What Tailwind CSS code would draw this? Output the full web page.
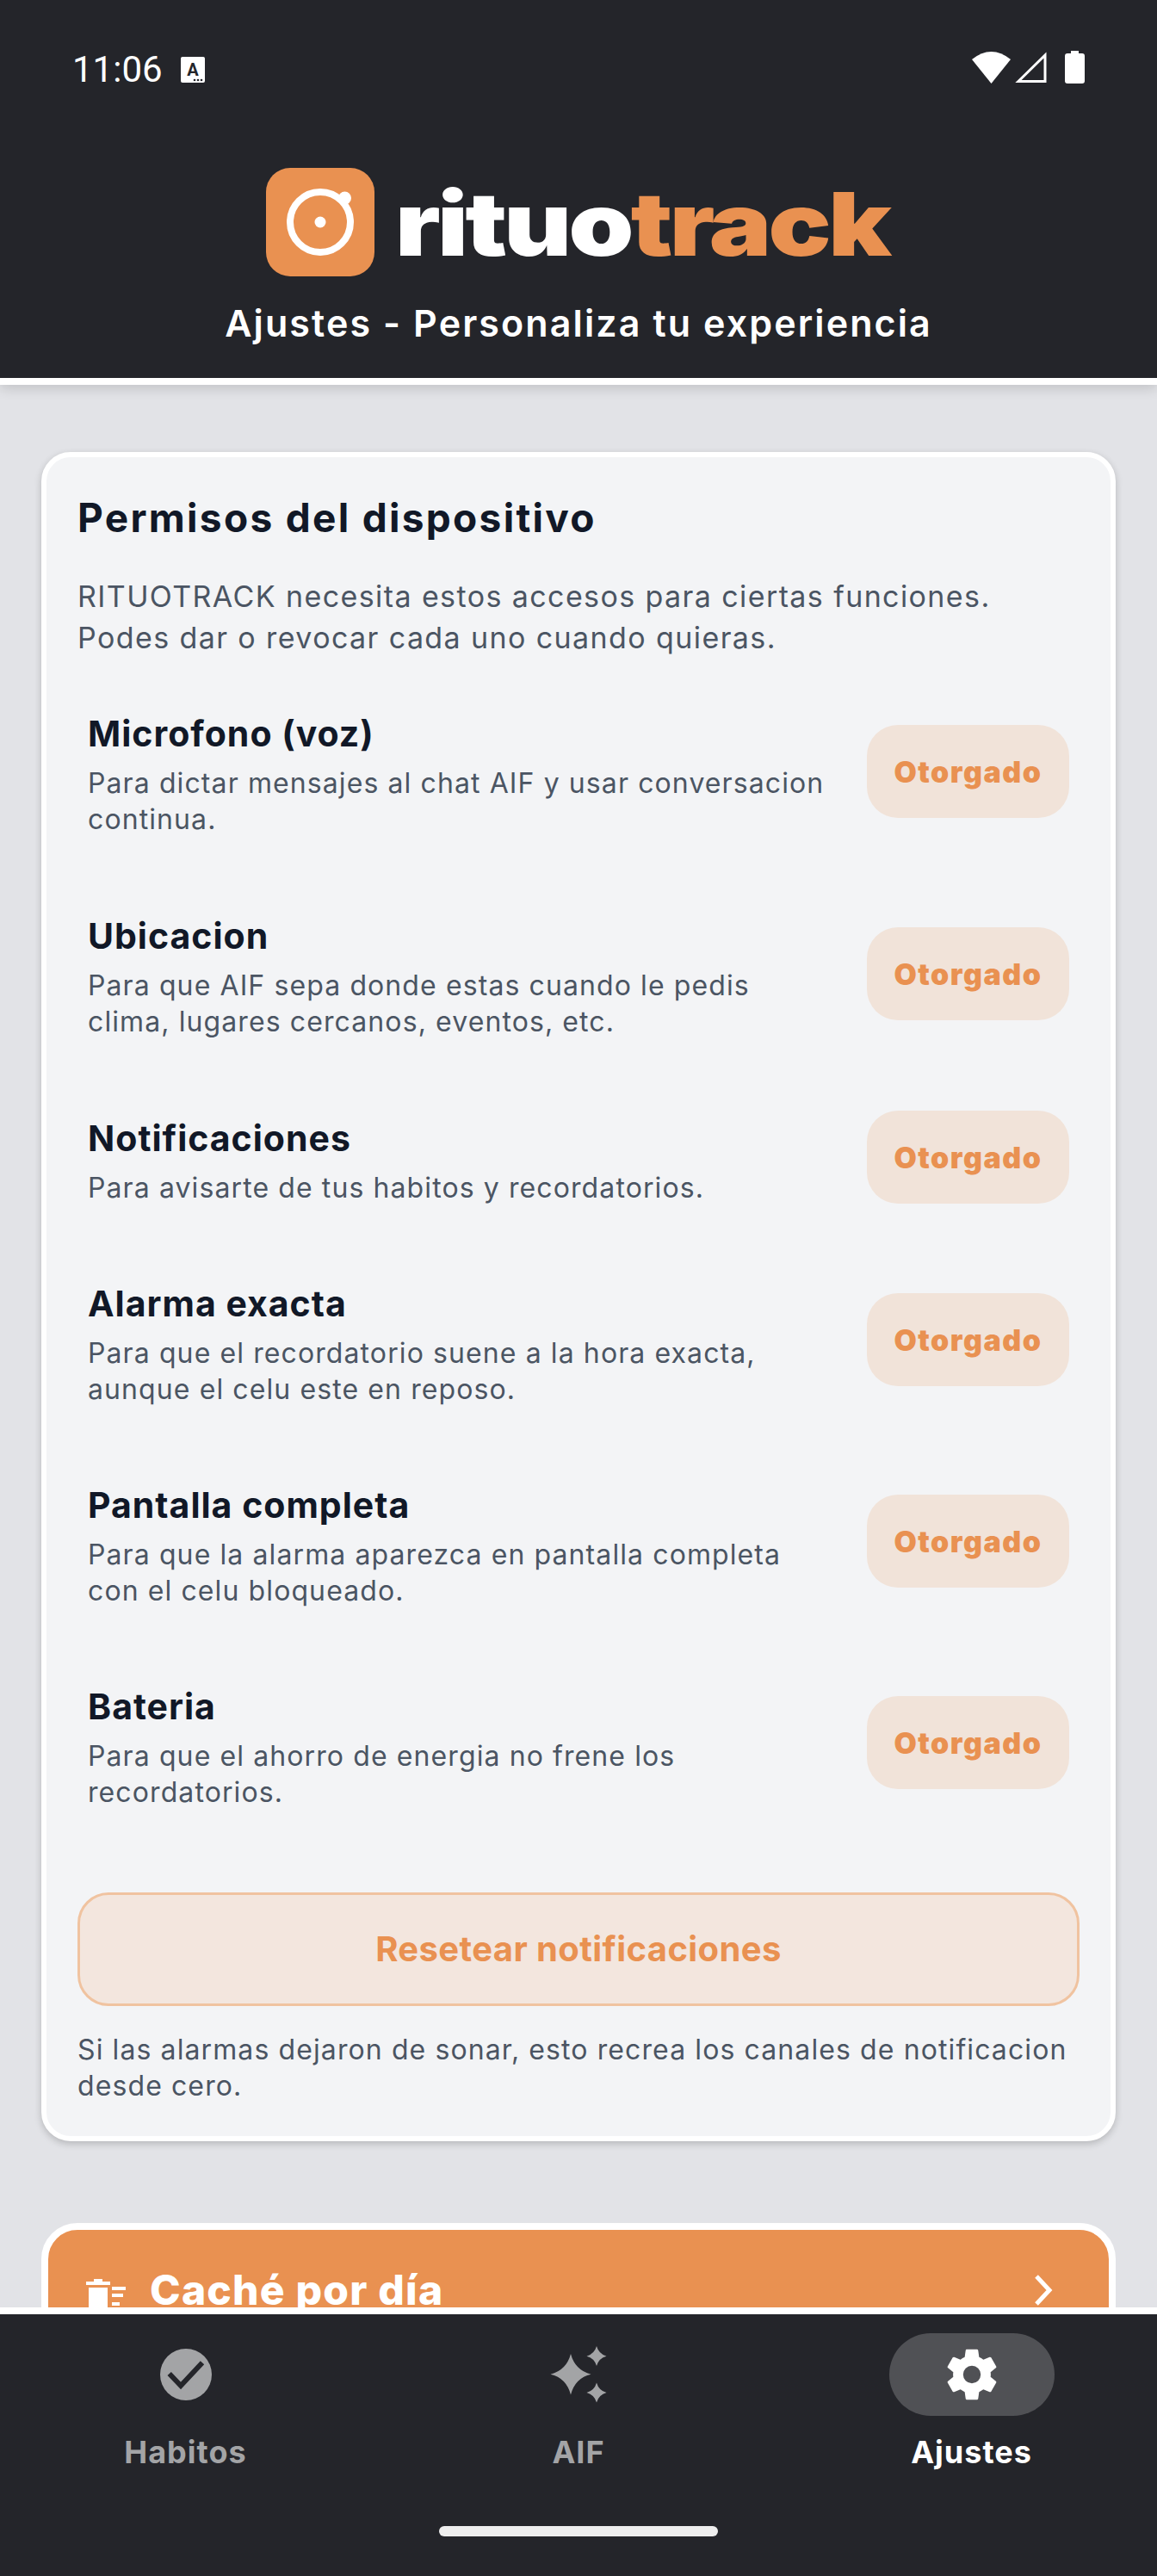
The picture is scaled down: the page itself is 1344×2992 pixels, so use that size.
<!DOCTYPE html>
<html lang="es">
<head>
    <meta charset="UTF-8">
    <meta name="viewport" content="width=device-width, initial-scale=1.0">
    <title>Ritutrack Ajustes</title>
    <script src="https://cdn.jsdelivr.net/npm/@tailwindcss/browser@4"></script>
</head>
<body class="bg-[#e2e3e7] font-['Inter',sans-serif]">
<div class="h-[2992px] w-[1344px] flex flex-col overflow-hidden">
    <!-- Header -->
    <header class="h-[447px] shrink-0 bg-[#24252a] border-b-[8px] border-white relative z-10 shadow-[0_4px_14px_rgba(0,0,0,0.15)]">
        <div class="h-[130px] pt-[56px] px-[84px] flex justify-between items-start">
            <div class="flex items-center gap-[21px]">
                <span class="font-['Roboto',sans-serif] text-[42px] leading-[50px] text-white">11:06</span>
                <svg class="w-[28px] h-[30px]" viewBox="0 0 28 30"><rect width="28" height="30" rx="2" fill="#fff"/><text x="14" y="22" text-anchor="middle" font-size="20" font-weight="700" font-family="Roboto" fill="#24252a">A</text><circle cx="16" cy="27" r="1.3" fill="#24252a"/><circle cx="20" cy="27" r="1.3" fill="#24252a"/><circle cx="24" cy="27" r="1.3" fill="#24252a"/></svg>
            </div>
            <div class="flex items-start mt-[3px]">
                <svg class="w-[45px] h-[38px]" viewBox="0 0 45 38"><path d="M22.5 38 0 10Q22.5-8 45 10z" fill="#fff"/></svg>
                <svg class="w-[38px] h-[38px] ml-[4px]" viewBox="0 0 38 38"><path d="M36 5v30.500H5z" fill="none" stroke="#fff" stroke-width="3"/></svg>
                <svg class="w-[23px] h-[38px] ml-[21px]" viewBox="0 0 23 38"><path d="M7 0h9v3h4a3 3 0 0 1 3 3v29a3 3 0 0 1-3 3H3a3 3 0 0 1-3-3V6a3 3 0 0 1 3-3h4z" fill="#fff"/></svg>
            </div>
        </div>
        <div class="flex justify-center items-start gap-[29px] mt-[65px]">
            <div class="w-[126px] h-[126px] rounded-[28px] bg-[#e99151] flex items-center justify-center">
                <svg class="w-[126px] h-[126px]" viewBox="0 0 126 126"><circle cx="63" cy="63" r="35" fill="none" stroke="#fff" stroke-width="8"/><circle cx="63" cy="63" r="6.500" fill="#fff"/><circle cx="91.500" cy="35" r="7.500" fill="#fff"/></svg>
            </div>
            <div class="w-[571px] pt-[2px] font-black text-[102px] leading-[126px] tracking-[-3px]"><span class="inline-block whitespace-nowrap -ml-[5px] origin-left scale-x-[1.19]"><span class="text-white">rituo</span><span class="text-[#e99151]">track</span></span></div>
        </div>
        <p class="text-center text-white text-[43px] leading-[56px] tracking-[2.1px] font-semibold mt-[24px]">Ajustes - Personaliza tu experiencia</p>
    </header>

    <!-- Content -->
    <main class="flex-1 overflow-hidden px-[48px] pt-[78px]">
        <section class="bg-[#f3f4f6] border-[6px] border-white rounded-[34px] shadow-[0_3px_8px_rgba(0,0,0,0.2)] px-[36px] pt-[40px] pb-[24px] h-[1962px]">
            <h2 class="text-[46px] leading-[60px] tracking-[2.3px] font-bold text-[#111827]">Permisos del dispositivo</h2>
            <p class="text-[34px] leading-[48px] tracking-[1.4px] text-[#4b5563] mt-[38px]">RITUOTRACK necesita estos accesos para ciertas funciones.<br>Podes dar o revocar cada uno cuando quieras.</p>

            <div class="mt-[45px]">
                <div class="h-[235px] px-[12px] flex gap-[44px]">
                    <div class="w-[864px] pt-[14px]">
                        <h3 class="text-[41px] leading-[56px] tracking-[1px] font-bold text-[#111827]">Microfono (voz)</h3>
                        <p class="text-[32px] leading-[42px] tracking-[1.1px] text-[#4b5563] mt-[9px]">Para dictar mensajes al chat AIF y usar conversacion continua.</p>
                    </div>
                    <div class="w-[236px] h-[108px] mt-[32px] rounded-[36px] bg-[#f1e3d9] text-[#e99151] text-[34px] tracking-[1.5px] font-black flex items-center justify-center">Otorgado</div>
                </div>
                <div class="h-[235px] px-[12px] flex gap-[44px]">
                    <div class="w-[864px] pt-[14px]">
                        <h3 class="text-[41px] leading-[56px] tracking-[1px] font-bold text-[#111827]">Ubicacion</h3>
                        <p class="text-[32px] leading-[42px] tracking-[1.1px] text-[#4b5563] mt-[9px]">Para que AIF sepa donde estas cuando le pedis clima, lugares cercanos, eventos, etc.</p>
                    </div>
                    <div class="w-[236px] h-[108px] mt-[32px] rounded-[36px] bg-[#f1e3d9] text-[#e99151] text-[34px] tracking-[1.5px] font-black flex items-center justify-center">Otorgado</div>
                </div>
                <div class="h-[192px] px-[12px] flex gap-[44px]">
                    <div class="w-[864px] pt-[14px]">
                        <h3 class="text-[41px] leading-[56px] tracking-[1px] font-bold text-[#111827]">Notificaciones</h3>
                        <p class="text-[32px] leading-[42px] tracking-[1.1px] text-[#4b5563] mt-[9px]">Para avisarte de tus habitos y recordatorios.</p>
                    </div>
                    <div class="w-[236px] h-[108px] mt-[10px] rounded-[36px] bg-[#f1e3d9] text-[#e99151] text-[34px] tracking-[1.5px] font-black flex items-center justify-center">Otorgado</div>
                </div>
                <div class="h-[234px] px-[12px] flex gap-[44px]">
                    <div class="w-[864px] pt-[14px]">
                        <h3 class="text-[41px] leading-[56px] tracking-[1px] font-bold text-[#111827]">Alarma exacta</h3>
                        <p class="text-[32px] leading-[42px] tracking-[1.1px] text-[#4b5563] mt-[9px]">Para que el recordatorio suene a la hora exacta, aunque el celu este en reposo.</p>
                    </div>
                    <div class="w-[236px] h-[108px] mt-[30px] rounded-[36px] bg-[#f1e3d9] text-[#e99151] text-[34px] tracking-[1.5px] font-black flex items-center justify-center">Otorgado</div>
                </div>
                <div class="h-[234px] px-[12px] flex gap-[44px]">
                    <div class="w-[864px] pt-[14px]">
                        <h3 class="text-[41px] leading-[56px] tracking-[1px] font-bold text-[#111827]">Pantalla completa</h3>
                        <p class="text-[32px] leading-[42px] tracking-[1.1px] text-[#4b5563] mt-[9px]">Para que la alarma aparezca en pantalla completa con el celu bloqueado.</p>
                    </div>
                    <div class="w-[236px] h-[108px] mt-[30px] rounded-[36px] bg-[#f1e3d9] text-[#e99151] text-[34px] tracking-[1.5px] font-black flex items-center justify-center">Otorgado</div>
                </div>
                <div class="h-[258px] px-[12px] flex gap-[44px]">
                    <div class="w-[864px] pt-[14px]">
                        <h3 class="text-[41px] leading-[56px] tracking-[1px] font-bold text-[#111827]">Bateria</h3>
                        <p class="text-[32px] leading-[42px] tracking-[1.1px] text-[#4b5563] mt-[9px]">Para que el ahorro de energia no frene los recordatorios.</p>
                    </div>
                    <div class="w-[236px] h-[108px] mt-[30px] rounded-[36px] bg-[#f1e3d9] text-[#e99151] text-[34px] tracking-[1.5px] font-black flex items-center justify-center">Otorgado</div>
                </div>
            </div>

            <button class="w-full h-[132px] rounded-[36px] border-[3px] border-[#f0c3a0] bg-[#f3e6de] text-[#e99151] text-[40px] tracking-[0.4px] font-bold">Resetear notificaciones</button>
            <p class="text-[32px] leading-[42px] tracking-[1.1px] text-[#4b5563] mt-[30px]">Si las alarmas dejaron de sonar, esto recrea los canales de notificacion desde cero.</p>
        </section>

        <section class="mt-[95px] h-[200px] bg-[#e99151] border-[8px] border-white rounded-[42px] pl-[44px] pr-[64px] pt-[40px] flex justify-between items-start">
            <div class="flex items-center gap-[28px]">
                <svg class="w-[46px] h-[38px] mt-[12px]" viewBox="0 0 46 38"><path d="M9 0h10v3h9v4H0V3h9zM3 10h22v24a2 2 0 0 1-2 2H5a2 2 0 0 1-2-2zM30 9h16v4H30zM30 17h13v4H30zM30 27h9v4H30z" fill="#fff"/></svg>
                <span class="text-[48px] leading-[60px] tracking-[1.2px] font-extrabold text-white">Caché por día</span>
            </div>
            <svg class="w-[24px] h-[38px] mt-[11px]" viewBox="0 0 24 38"><path d="M4 3l15 16L4 35" fill="none" stroke="#fff" stroke-width="5"/></svg>
        </section>
    </main>

    <!-- Bottom nav -->
    <nav class="h-[312px] shrink-0 bg-[#24252a] border-t-[8px] border-white relative z-10">
        <div class="flex pt-[22px]">
            <div class="flex flex-col items-center w-[431px]">
                <div class="h-[96px] flex items-center justify-center">
                    <svg class="w-[60px] h-[60px]" viewBox="0 0 60 60"><circle cx="30" cy="30" r="30" fill="#a3a4a6"/><path d="M10.700 29 24 43 49 16.300" fill="none" stroke="#24252a" stroke-width="6"/></svg>
                </div>
                <span class="text-[36px] leading-[50px] tracking-[1px] font-bold text-[#a3a4a6] mt-[17px]">Habitos</span>
            </div>
            <div class="flex flex-col items-center w-[482px]">
                <div class="h-[96px] flex items-center justify-center">
                    <svg class="w-[100px] h-[100px] shrink-0" viewBox="0 0 100 100"><path d="M41 26Q46 45 64.500 49.700 46 54 41 73.500 36 54 17.500 49.700 36 45 41 26zM71 17Q73.500 26 82.500 28.700 73.500 31 71 40 68.500 31 59.500 28.700 68.500 26 71 17zM71 59.500Q73.500 68.500 82.500 71 73.500 73.500 71 82.500 68.500 73.500 59.500 71 68.500 68.500 71 59.500z" fill="#a3a4a6"/></svg>
                </div>
                <span class="text-[36px] leading-[50px] tracking-[1px] font-bold text-[#a3a4a6] mt-[17px]">AIF</span>
            </div>
            <div class="flex flex-col items-center w-[431px]">
                <div class="w-[192px] h-[96px] rounded-[48px] bg-[#505155] flex items-center justify-center">
                    <svg class="w-[70px] h-[70px]" viewBox="0 0 24 24"><path d="M19.430 12.980c.04-.32.07-.64.07-.98s-.03-.66-.07-.98l2.110-1.650c.19-.15.24-.42.12-.64l-2-3.460c-.12-.22-.39-.3-.61-.22l-2.490 1c-.52-.4-1.080-.73-1.690-.98l-.38-2.650A.49.49 0 0 0 14 2h-4c-.25 0-.46.18-.49.42l-.38 2.650c-.61.25-1.170.59-1.690.98l-2.490-1c-.23-.09-.49 0-.61.22l-2 3.460c-.13.22-.07.49.12.64l2.110 1.650c-.04.32-.07.65-.07.98s.03.66.07.98l-2.110 1.650c-.19.15-.24.42-.12.64l2 3.460c.12.22.39.3.61.22l2.490-1c.52.4 1.080.73 1.690.98l.38 2.650c.03.24.24.42.49.42h4c.25 0 .46-.18.49-.42l.38-2.650c.61-.25 1.170-.59 1.690-.98l2.490 1c.23.09.49 0 .61-.22l2-3.460c.12-.22.07-.49-.12-.64l-2.110-1.650zM12 15.500a3.500 3.500 0 1 1 0-7 3.500 3.500 0 0 1 0 7z" fill="#fff"/></svg>
                </div>
                <span class="text-[36px] leading-[50px] tracking-[1px] font-bold text-white mt-[17px]">Ajustes</span>
            </div>
        </div>
        <div class="w-[324px] h-[12px] rounded-full bg-[#eeeeee] mx-auto mt-[61px]"></div>
    </nav>
</div>
</body>
</html>
